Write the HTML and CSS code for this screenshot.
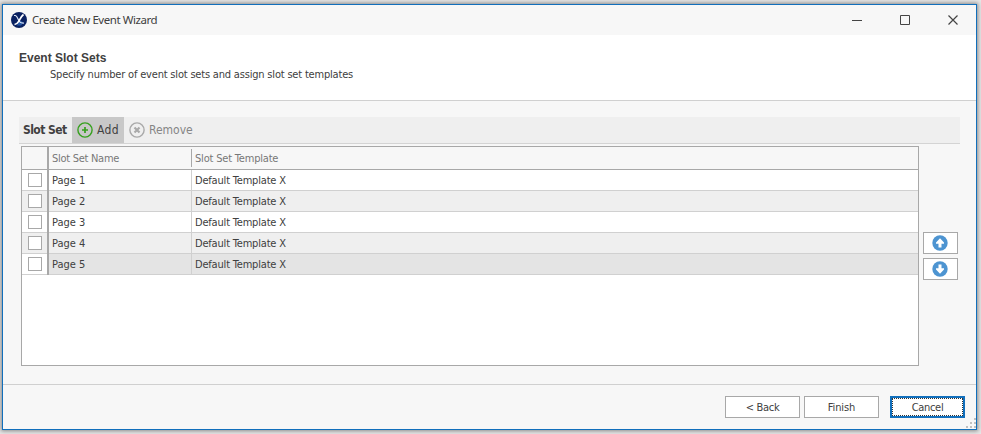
FILE: index.html
```html
<!DOCTYPE html>
<html lang="en">
<head>
<meta charset="utf-8">
<title>Create New Event Wizard</title>
<link rel="stylesheet" href="styles.css">
</head>
<body>
<div class="window">
  <header class="titlebar">
    <svg class="logo" width="16" height="16" viewBox="0 0 16 16"><circle cx="8" cy="8" r="8" fill="#0a2161"/><path d="M8.500 8l4 2.500-2.500 3-4 0z" fill="#2355a4"/><path d="M3 3.500h1.500C6 4 7 7 8.200 9.200c1 1.800 2.300 2 4.800 1.800" fill="none" stroke="#dfe8f8" stroke-width="1.200"/><path d="M12.500 2.500C10 4.500 9 7.500 7.500 9.700 6.500 11.500 5 12.300 3.500 12.500" fill="none" stroke="#fff" stroke-width="1.700"/></svg>
    <span class="caption">Create New Event Wizard</span>
    <svg class="controls" width="106" height="12" viewBox="0 0 106 12" fill="none" stroke="#444"><path d="M0 6.500h10"/><path d="M48.500 1.500h9v9h-9z"/><path d="M96.500 1.500l9 9m0-9l-9 9" stroke-width="1.200"/></svg>
  </header>
  <section class="intro">
    <h1>Event Slot Sets</h1>
    <p>Specify number of event slot sets and assign slot set templates</p>
  </section>
  <main class="content">
    <div class="toolbar">
      <strong class="label">Slot Set</strong>
      <div class="tool add"><svg width="16" height="16" viewBox="0 0 16 16" fill="none" stroke="#36a01e"><circle cx="8" cy="8" r="7.100" stroke-width="1.400"/><path d="M8 5v6M5 8h6" stroke-width="1.700"/></svg><span>Add</span></div>
      <div class="tool remove"><svg width="16" height="16" viewBox="0 0 16 16" fill="none" stroke="#a9a9a9"><circle cx="8" cy="8" r="7.100" stroke-width="1.400"/><path d="M5.500 5.500l5 5m0-5l-5 5" stroke-width="2.200"/></svg><span>Remove</span></div>
    </div>
    <div class="workspace">
      <div class="grid">
        <div class="row head"><i class="select"></i><div class="name">Slot Set Name</div><div class="template">Slot Set Template</div></div>
        <div class="row"><div class="select"><i class="check"></i></div><div class="name">Page 1</div><div class="template">Default Template X</div></div>
        <div class="row alt"><div class="select"><i class="check"></i></div><div class="name">Page 2</div><div class="template">Default Template X</div></div>
        <div class="row"><div class="select"><i class="check"></i></div><div class="name">Page 3</div><div class="template">Default Template X</div></div>
        <div class="row alt"><div class="select"><i class="check"></i></div><div class="name">Page 4</div><div class="template">Default Template X</div></div>
        <div class="row current"><div class="select"><i class="check"></i></div><div class="name">Page 5</div><div class="template">Default Template X</div></div>
      </div>
      <div class="order">
        <button class="move" aria-label="Move up"><svg width="16" height="16" viewBox="0 0 16 16"><circle cx="8" cy="8" r="7.700" fill="#4d94d1"/><path d="M8 3.300 12 7.500v1.300H9.500V12.500h-3V8.800H4V7.500z" fill="#fff"/></svg></button>
        <button class="move" aria-label="Move down"><svg width="16" height="16" viewBox="0 0 16 16"><circle cx="8" cy="8" r="7.700" fill="#4d94d1"/><path d="M8 12.700 12 8.500V7.200H9.500V3.500h-3v3.700H4v1.300z" fill="#fff"/></svg></button>
      </div>
    </div>
  </main>
  <footer class="footer">
    <button class="btn back">&lt; Back</button>
    <button class="btn finish">Finish</button>
    <button class="btn cancel"><span>Cancel</span></button>
    <svg class="grip" width="11" height="11" viewBox="0 0 11 11" fill="#c0c0c0"><path d="M9 0h2v2H9zM5 4h2v2H5zM9 4h2v2H9zM1 8h2v2H1zM5 8h2v2H5zM9 8h2v2H9z"/></svg>
  </footer>
</div>
</body>
</html>
```
FILE: styles.css
```css
* { box-sizing: border-box; }
body {
  margin: 0;
  height: 434px;
  padding: 4px 4px 4px 2px;
  overflow: hidden;
  background: #e6e6e6;
  color: #404040;
  font: 11px/20px "DejaVu Sans Condensed", "DejaVu Sans", sans-serif;
  font-stretch: condensed;
  letter-spacing: -0.19px;
}
.window {
  display: flex;
  flex-direction: column;
  width: 975px;
  height: 426px;
  border: 1px solid #116fbc;
  background: #f7f7f7;
  box-shadow: 0 0 4px 1px #888;
}
.titlebar {
  display: flex;
  align-items: center;
  height: 30px;
  padding: 0 18px 0 8px;
}
.caption { margin-left: 5px; font: 11.5px/20px "Noto Sans", sans-serif; letter-spacing: -0.45px; }
.controls { margin-left: auto; }
.intro {
  height: 66px;
  padding: 14px 0 0 16px;
  background: #fff;
  border-bottom: 1px solid #d0d0d0;
}
.intro h1 { margin: 0; font: bold 12px/18px "Liberation Sans", sans-serif; letter-spacing: 0; }
.intro p { margin: -1px 0 0 31px; line-height: 18px; }
.content { height: 283px; padding: 16px 16px 0; }
.toolbar {
  display: flex;
  height: 27px;
  background: #efefef;
  border-bottom: 1px solid #d4d4d4;
  font-size: 12px;
  line-height: 26px;
}
.label { width: 53px; padding-left: 4px; letter-spacing: -0.55px; white-space: nowrap; }
.tool { display: flex; align-items: center; gap: 4px; padding-left: 5px; letter-spacing: 0.3px; }
.add { width: 52px; background: #c8c8c8; }
.remove { color: #858585; letter-spacing: 0; }
.workspace { display: flex; gap: 4px; padding: 2px 0 0 2px; }
.grid { width: 898px; height: 220px; border: 1px solid #a8a8a8; background: #fff; }
.row {
  display: grid;
  grid-template-columns: 27px 143px 1fr;
  height: 21px;
  border-bottom: 1px solid #d0d0d0;
}
.select { display: grid; place-items: center; border-right: 2px solid #a8a8a8; }
.row .select { height: 21px; padding-bottom: 1px; }
.check { width: 14px; height: 14px; border: 1px solid #a8a8a8; background: #fff; }
.name, .template { height: 20px; padding-left: 3px; line-height: 21px; }
.name { border-right: 1px solid #d0d0d0; letter-spacing: 0; }
.head { height: 23px; background: #f7f7f7; border-bottom-color: #a8a8a8; color: #777; }
.head .select { height: 23px; }
.head .name, .head .template { height: 18px; margin: 2px 0; line-height: 19px; }
.head .name { border-right-color: #a8a8a8; letter-spacing: -0.28px; }
.alt { background: #efefef; }
.current { background: linear-gradient(90deg, #fff 27px, #e4e4e4 27px); }
.order { display: flex; flex-direction: column; gap: 4px; padding-top: 86px; }
.move {
  display: grid;
  place-items: center;
  width: 35px;
  height: 22px;
  padding: 0 1px 0 0;
  border: 1px solid #a8a8a8;
  background: #fff;
}
.footer {
  position: relative;
  display: flex;
  height: 45px;
  padding: 11px 11px 0 0;
  border-top: 1px solid #d0d0d0;
  justify-content: flex-end;
}
.btn {
  width: 75px;
  height: 22px;
  padding: 1px 0 0;
  border: 1px solid #a8a8a8;
  background: #fff;
  color: inherit;
  font: inherit;
  letter-spacing: -0.3px;
}
.finish { margin: 0 11px 0 4px; letter-spacing: -0.1px; }
.cancel { padding: 0; border: 2px solid #116fbc; }
.cancel span { display: block; height: 18px; border: 1px dotted #333; line-height: 17px; }
.grip { position: absolute; right: 0; bottom: 0; }
```
